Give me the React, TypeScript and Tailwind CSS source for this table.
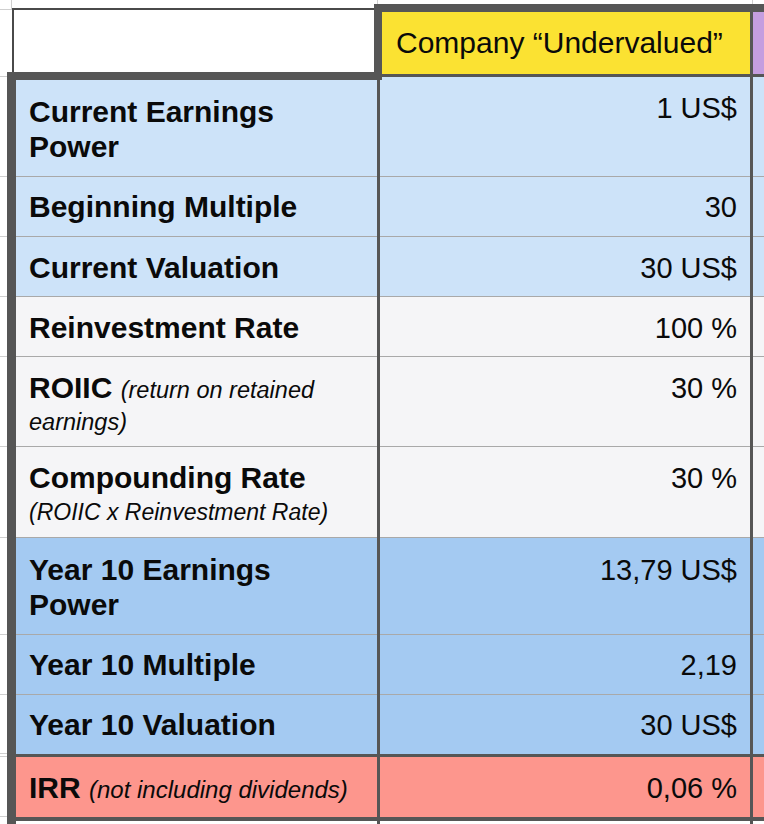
import React from "react";

const DARK = "bg-[#565656]";

type RowProps = {
  h: string;
  bg: string;
  label: React.ReactNode;
  value: string;
  line?: boolean;
  lpt?: string;
  vpt?: string;
};

function Row({ h, bg, label, value, line = true, lpt = "pt-[13px]", vpt = "pt-[13px]" }: RowProps) {
  const b = line ? "border-b border-[#a9a9a9]" : "";
  return (
    <div className={`flex ${h}`}>
      <div className="w-[7px] border-b border-[#cfcfcf] bg-white" />
      <div className={`w-[9px] ${DARK}`} />
      <div className={`w-[361px] ${bg} ${b} pl-[13px] pr-[10px] ${lpt}`}>{label}</div>
      <div className={`w-[3px] ${DARK}`} />
      <div className={`w-[370px] ${bg} ${b} pr-[13px] text-right text-[29px] leading-[36px] ${vpt}`}>{value}</div>
      <div className={`w-[3px] ${DARK}`} />
      <div className={`flex-1 ${bg} ${b}`} />
    </div>
  );
}

const L = ({ children }: { children: React.ReactNode }) => (
  <div className="text-[30px] font-bold leading-[36px] whitespace-nowrap">{children}</div>
);

export default function App() {
  const blue = "bg-[#cde3f9]";
  const gray = "bg-[#f5f5f7]";
  const mid = "bg-[#a4caf2]";
  const red = "bg-[#fd968d]";
  return (
    <div
      className="w-[764px] h-[824px] overflow-hidden bg-white text-[#0a0a0a]"
      style={{ fontFamily: '"Liberation Sans", Arial, Helvetica, sans-serif' }}
    >
      {/* header */}
      <div className="flex h-[80px]">
        <div className="w-[12px] flex flex-col">
          <div className="h-[9px] border-r border-[#cfcfcf]" />
          <div className="h-px bg-[#cfcfcf]" />
          <div className="h-[62px]" />
          <div className="h-[8px] flex">
            <div className="w-[7px] h-[5px] border-b border-[#cfcfcf]" />
            <div className={`flex-1 ${DARK}`} />
          </div>
        </div>
        <div className="w-[362px] flex flex-col">
          <div className="h-[8px]" />
          <div className="h-[2px] bg-[#4a4a4a]" />
          <div className="h-[62px] border-l-2 border-[#4a4a4a] bg-white" />
          <div className={`h-[8px] ${DARK}`} />
        </div>
        <div className="w-[379px] flex flex-col">
          <div className="h-[4px] flex">
            <div className="w-[3px]" />
            <div className="w-px bg-[#cfcfcf]" />
            <div className="flex-1" />
            <div className="w-px bg-[#cfcfcf]" />
          </div>
          <div className="h-[73px] border-l-[8px] border-t-[8px] border-r-[3px] border-b-[3px] border-[#565656] bg-[#fbe232] flex items-center pl-[14px] text-[30px] leading-[36px] whitespace-nowrap">
            Company “Undervalued”
          </div>
          <div className="h-[3px] flex">
            <div className={`w-[8px] ${DARK}`} />
            <div className={`flex-1 ${blue}`} />
            <div className={`w-[3px] ${DARK}`} />
          </div>
        </div>
        <div className="flex-1 flex flex-col">
          <div className="h-[4px]" />
          <div className={`h-[8px] ${DARK}`} />
          <div className="h-[62px] bg-[#c59ee0]" />
          <div className={`h-[3px] ${DARK}`} />
          <div className={`h-[3px] ${blue}`} />
        </div>
      </div>

      <Row
        h="h-[97px]"
        bg={blue}
        lpt="pt-[14px]"
        vpt="pt-[10px]"
        label={
          <div className="text-[30px] font-bold leading-[35px]">
            <div>Current Earnings</div>
            <div>Power</div>
          </div>
        }
        value="1 US$"
      />
      <Row h="h-[60px]" bg={blue} lpt="pt-[12px]" vpt="pt-[12px]" label={<L>Beginning Multiple</L>} value="30" />
      <Row h="h-[60px]" bg={blue} label={<L>Current Valuation</L>} value="30 US$" />
      <Row h="h-[60px]" bg={gray} label={<L>Reinvestment Rate</L>} value="100 %" />
      <Row
        h="h-[90px]"
        bg={gray}
        label={
          <div>
            <div className="h-[36px] text-[30px] font-bold leading-[36px] whitespace-nowrap">
              ROIIC{" "}
              <span className="text-[23.5px] font-normal italic leading-[24px]">(return on retained</span>
            </div>
            <div className="text-[23.5px] italic leading-[32px]">earnings)</div>
          </div>
        }
        value="30 %"
      />
      <Row
        h="h-[91px]"
        bg={gray}
        label={
          <div>
            <L>Compounding Rate</L>
            <div className="text-[23px] italic leading-[32px] whitespace-nowrap">(ROIIC x Reinvestment Rate)</div>
          </div>
        }
        value="30 %"
      />
      <Row
        h="h-[97px]"
        bg={mid}
        lpt="pt-[14px]"
        vpt="pt-[14px]"
        label={
          <div className="text-[30px] font-bold leading-[35px]">
            <div>Year 10 Earnings</div>
            <div>Power</div>
          </div>
        }
        value="13,79 US$"
      />
      <Row h="h-[60px]" bg={mid} lpt="pt-[12px]" vpt="pt-[12px]" label={<L>Year 10 Multiple</L>} value="2,19" />
      <Row h="h-[59px]" bg={mid} line={false} lpt="pt-[12px]" vpt="pt-[12px]" label={<L>Year 10 Valuation</L>} value="30 US$" />
      <div className="flex h-[3px]">
        <div className="w-[7px] border-b border-[#cfcfcf] bg-white" />
        <div className={`flex-1 ${DARK}`} />
      </div>
      <Row
        h="h-[60px]"
        bg={red}
        line={false}
        label={
          <div className="h-[36px] text-[30px] font-bold leading-[36px] whitespace-nowrap">
            IRR{" "}
            <span className="text-[24px] font-normal italic leading-[24px]">(not including dividends)</span>
          </div>
        }
        value="0,06 %"
      />
      <div className="flex h-[4px]">
        <div className="w-[7px] bg-white" />
        <div className={`flex-1 ${DARK}`} />
      </div>
      <div className="flex h-[10px]">
        <div className="w-[7px] bg-white" />
        <div className={`w-[9px] ${DARK}`} />
        <div className="w-[361px] bg-white" />
        <div className={`w-[3px] ${DARK}`} />
        <div className="w-[370px] bg-white" />
        <div className={`w-[3px] ${DARK}`} />
        <div className="flex-1 bg-white" />
      </div>
    </div>
  );
}
